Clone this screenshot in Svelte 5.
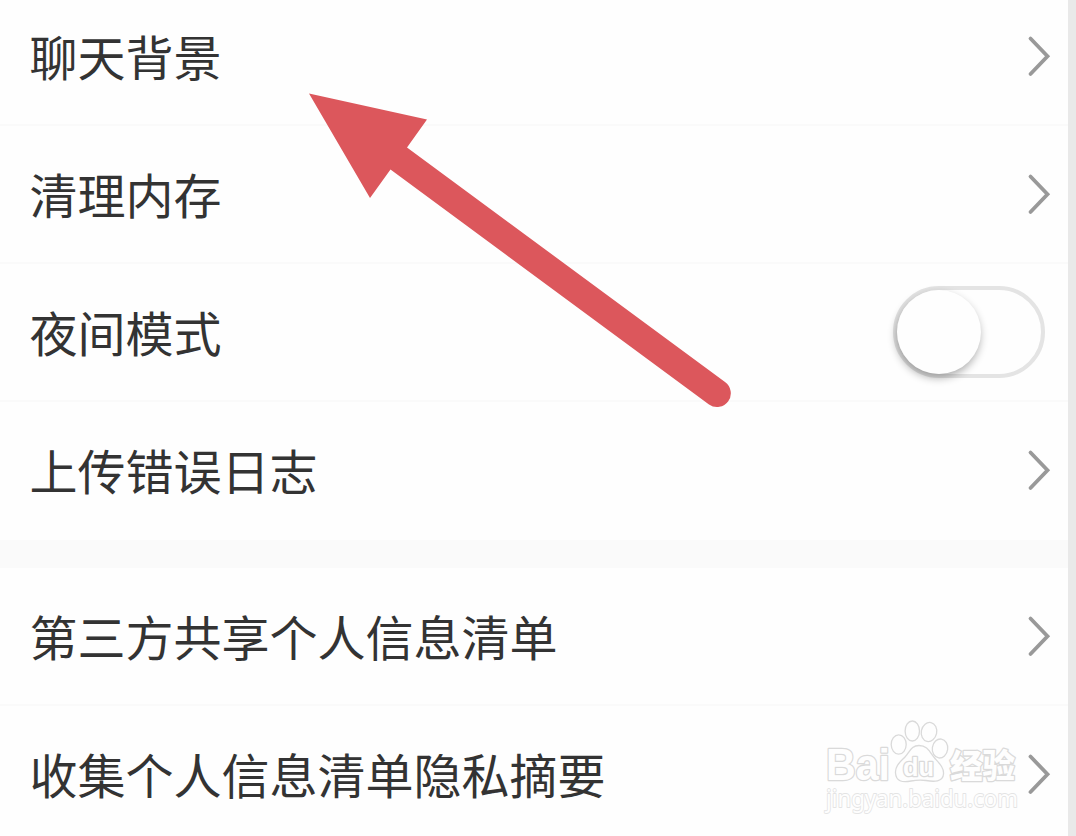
<script>
  const groups = [
    [
      { label: '聊天背景' },
      { label: '清理内存' },
      { label: '夜间模式', toggle: true },
      { label: '上传错误日志' }
    ],
    [{ label: '第三方共享个人信息清单' }, { label: '收集个人信息清单隐私摘要' }]
  ];
</script>

<main>
  <div class="list">
    {#each groups as group}
      <section>
        {#each group as item}
          <div class="row">
            <span class="label">{item.label}</span>
            {#if item.toggle}
              <div class="switch"><div class="knob"></div></div>
            {:else}
              <svg class="chevron" width="26" height="44" viewBox="0 0 26 44">
                <path d="M4.500 4.500 21.500 22.300 4.500 40" />
              </svg>
            {/if}
          </div>
        {/each}
      </section>
    {/each}
  </div>
  <div class="edge"></div>

  <svg class="arrow" width="1076" height="836" viewBox="0 0 1076 836">
    <path d="M309 93.500 427 119.500 407 147.500 725 382A13.800 13.800 0 0 1 709 404.500L390.500 169.500 370 198Z" />
  </svg>

  <svg class="watermark" width="210" height="110" viewBox="820 715 210 110">
    <g class="ink">
      <text x="826" y="780" class="brand" textLength="64" lengthAdjust="spacingAndGlyphs">Bai</text>
      <ellipse cx="898.700" cy="744.500" rx="7.500" ry="9.700" />
      <ellipse cx="912.300" cy="731" rx="7.200" ry="10" />
      <ellipse cx="929" cy="732" rx="7.700" ry="9.600" transform="rotate(12 929 732)" />
      <ellipse cx="940" cy="748.500" rx="7.700" ry="9.500" transform="rotate(8 940 748.500)" />
      <path d="M919 745.500C928 745.500 930 753 935 758.500C940 764 944 768 943.500 774C943 782 934 782 926 780.500C920 779.500 916 780 911 781C902 783 896 781 895.500 773C895 766 900 762 905 757C910 752 911 745.500 919 745.500Z" />
      <text x="903" y="775.500" class="du" textLength="31" lengthAdjust="spacingAndGlyphs">du</text>
      <text x="950" y="778" class="cn" textLength="65" lengthAdjust="spacingAndGlyphs">经验</text>
      <text x="826" y="807" class="url" textLength="192" lengthAdjust="spacingAndGlyphs">jingyan.baidu.com</text>
    </g>
  </svg>
</main>

<style>
  :global(body) {
    background: #fefefe;
    overflow: hidden;
  }
  main {
    position: relative;
    display: flex;
    width: 1076px;
    height: 836px;
    overflow: hidden;
    background: #fefefe;
    font-family: 'Noto Sans CJK SC', sans-serif;
  }
  .list {
    flex: 1;
    margin-top: -12px;
  }
  .edge {
    width: 8px;
    background: #e9e9e9;
  }
  section + section {
    border-top: 28px solid #fafafa;
  }
  .row {
    display: flex;
    align-items: center;
    justify-content: space-between;
    box-sizing: border-box;
    height: 138px;
    padding: 0 16px 0 29.500px;
    border-bottom: 2px solid #fafafa;
  }
  .row:last-child {
    border-bottom-color: transparent;
  }
  .label {
    padding-bottom: 2px;
    font-size: 48px;
    line-height: 70px;
    color: #333;
    white-space: nowrap;
  }
  .chevron path {
    fill: none;
    stroke: #999;
    stroke-width: 3.8;
    stroke-linecap: round;
    stroke-linejoin: miter;
  }
  .switch {
    box-sizing: border-box;
    width: 152px;
    height: 92px;
    margin-right: 7px;
    border: 4px solid #e4e4e4;
    border-radius: 46px;
  }
  .knob {
    width: 84px;
    height: 84px;
    border-radius: 50%;
    background: #fefefe;
    box-shadow: -1px 4px 9px rgba(0, 0, 0, 0.32);
  }
  .arrow {
    position: absolute;
    inset: 0;
    fill: #dc575c;
  }
  .watermark {
    position: absolute;
    left: 820px;
    top: 715px;
  }
  .ink {
    fill: #fefefe;
    stroke: #dadada;
    stroke-width: 1.3;
    stroke-linejoin: round;
  }
  .ink text {
    paint-order: stroke;
    stroke-width: 2.6;
  }
  .brand {
    font: bold 45px 'Liberation Sans', sans-serif;
  }
  .du {
    font: bold 25px 'Liberation Sans', sans-serif;
  }
  .cn {
    font: 900 33px 'Noto Sans CJK SC', sans-serif;
  }
  .ink .url {
    font: 24px 'Noto Sans', sans-serif;
    stroke: #e4e4e4;
    stroke-width: 1.8;
  }
</style>
